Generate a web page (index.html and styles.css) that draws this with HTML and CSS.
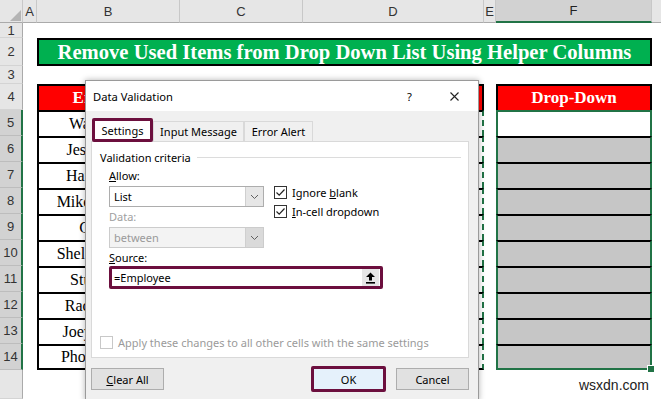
FILE: index.html
```html
<!DOCTYPE html>
<html lang="en">
<head>
    <meta charset="UTF-8">
    <title>Remove Used Items from Drop Down List</title>
    <link rel="stylesheet" href="styles.css">
</head>
<body>
    <div class="sheet">
        <!-- column headers -->
        <div class="corner">
            <svg width="14" height="14" viewBox="0 0 14 14"><polygon points="13,2 13,13 2,13" fill="#b4b4b4"/></svg>
        </div>
        <div class="colhead">A</div>
        <div class="colhead">B</div>
        <div class="colhead">C</div>
        <div class="colhead">D</div>
        <div class="colhead">E</div>
        <div class="colhead sel">F</div>
        <div class="colhead last"></div>

        <!-- row 1 -->
        <div class="rowhead">1</div>
        <div class="blank span7"></div>

        <!-- row 2 -->
        <div class="rowhead">2</div>
        <div class="blank"></div>
        <div class="title">Remove Used Items from Drop Down List Using Helper Columns</div>
        <div class="blank"></div>

        <!-- row 3 -->
        <div class="rowhead">3</div>
        <div class="blank span7"></div>

        <!-- row 4 -->
        <div class="rowhead">4</div>
        <div class="blank"></div>
        <div class="thead first">Employee</div>
        <div class="thead">Helper 1</div>
        <div class="thead">Helper 2</div>
        <div class="blank"></div>
        <div class="thead single">Drop-Down</div>
        <div class="blank"></div>

        <!-- rows 5 - 14 -->
        <div class="rowhead sel">5</div><div class="blank"></div>
        <div class="td first">Walt Disney</div><div class="td"></div><div class="td copy"></div>
        <div class="blank"></div><div class="dd white"></div><div class="blank"></div>

        <div class="rowhead sel">6</div><div class="blank"></div>
        <div class="td first">Jessica Jones</div><div class="td"></div><div class="td copy"></div>
        <div class="blank"></div><div class="dd"></div><div class="blank"></div>

        <div class="rowhead sel">7</div><div class="blank"></div>
        <div class="td first">Harold Finch</div><div class="td"></div><div class="td copy"></div>
        <div class="blank"></div><div class="dd"></div><div class="blank"></div>

        <div class="rowhead sel">8</div><div class="blank"></div>
        <div class="td first">Mike Wazowski</div><div class="td"></div><div class="td copy"></div>
        <div class="blank"></div><div class="dd"></div><div class="blank"></div>

        <div class="rowhead sel">9</div><div class="blank"></div>
        <div class="td first">Chandler</div><div class="td"></div><div class="td copy"></div>
        <div class="blank"></div><div class="dd"></div><div class="blank"></div>

        <div class="rowhead sel">10</div><div class="blank"></div>
        <div class="td first">Sheldon Cooper</div><div class="td"></div><div class="td copy"></div>
        <div class="blank"></div><div class="dd"></div><div class="blank"></div>

        <div class="rowhead sel">11</div><div class="blank"></div>
        <div class="td first">Stuart Little</div><div class="td"></div><div class="td copy"></div>
        <div class="blank"></div><div class="dd"></div><div class="blank"></div>

        <div class="rowhead sel">12</div><div class="blank"></div>
        <div class="td first">Rachel Green</div><div class="td"></div><div class="td copy"></div>
        <div class="blank"></div><div class="dd"></div><div class="blank"></div>

        <div class="rowhead sel">13</div><div class="blank"></div>
        <div class="td first">Joey Tribbiani</div><div class="td"></div><div class="td copy"></div>
        <div class="blank"></div><div class="dd"></div><div class="blank"></div>

        <div class="rowhead sel">14</div><div class="blank"></div>
        <div class="td first">Phoebe Buffay</div><div class="td"></div><div class="td copy"></div>
        <div class="blank"></div><div class="dd last"><span class="handle"></span></div><div class="blank"></div>

        <!-- row 15 -->
        <div class="rowhead"></div>
        <div class="blank span5"></div>
        <div class="blank mark">wsxdn.com</div>
        <div class="blank"></div>
    </div>

    <div class="dialog">
        <div class="dlg-title">
            <span>Data Validation</span>
            <span class="help">?</span>
            <span class="close">
                <svg width="9" height="9" viewBox="0 0 9 9"><path d="M0.5 0.5 L8.5 8.5 M8.5 0.5 L0.5 8.5" stroke="#222" stroke-width="1.1"/></svg>
            </span>
        </div>
        <div class="dlg-body">
            <div class="tabs">
                <div class="tab active">Settings</div>
                <div class="tab msg">Input Message</div>
                <div class="tab err">Error Alert</div>
            </div>
            <div class="panel">
                <div class="group">
                    <span>Validation criteria</span>
                    <span class="rule"></span>
                </div>
                <div class="criteria">
                    <div class="fields">
                        <div class="label"><u>A</u>llow:</div>
                        <div class="combo">
                            <span class="value">List</span>
                            <span class="arrow">
                                <svg width="9" height="6" viewBox="0 0 9 6"><path d="M1 1 L4.5 4.5 L8 1" fill="none" stroke="#606060" stroke-width="1"/></svg>
                            </span>
                        </div>
                        <div class="label off">Data:</div>
                        <div class="combo disabled">
                            <span class="value">between</span>
                            <span class="arrow">
                                <svg width="9" height="6" viewBox="0 0 9 6"><path d="M1 1 L4.5 4.5 L8 1" fill="none" stroke="#606060" stroke-width="1"/></svg>
                            </span>
                        </div>
                        <div class="label end"><u>S</u>ource:</div>
                    </div>
                    <div class="checks">
                        <div class="check">
                            <svg width="13" height="13" viewBox="0 0 13 13"><rect x="0.5" y="0.5" width="12" height="12" fill="#fff" stroke="#333"/><path d="M2.5 6.5 L5.2 9.2 L10.5 3.5" fill="none" stroke="#222" stroke-width="1.2"/></svg>
                            <span>Ignore <u>b</u>lank</span>
                        </div>
                        <div class="check">
                            <svg width="13" height="13" viewBox="0 0 13 13"><rect x="0.5" y="0.5" width="12" height="12" fill="#fff" stroke="#333"/><path d="M2.5 6.5 L5.2 9.2 L10.5 3.5" fill="none" stroke="#222" stroke-width="1.2"/></svg>
                            <span><u>I</u>n-cell dropdown</span>
                        </div>
                    </div>
                </div>
                <div class="source">
                    <span class="value">=Employee</span>
                    <span class="pick">
                        <svg width="11" height="12" viewBox="0 0 11 12"><polygon points="5.5,0.5 10,5 7,5 7,8.5 4,8.5 4,5 1,5" fill="#000"/><rect x="1" y="10" width="9" height="1.6" fill="#000"/></svg>
                    </span>
                </div>
                <div class="apply">
                    <svg width="13" height="13" viewBox="0 0 13 13"><rect x="0.5" y="0.5" width="12" height="12" fill="#fff" stroke="#c8c8c8"/></svg>
                    <span>Apply these changes to all other cells with the same settings</span>
                </div>
            </div>
            <div class="buttons">
                <button class="btn"><u>C</u>lear All</button>
                <button class="btn ok">OK</button>
                <button class="btn">Cancel</button>
            </div>
        </div>
    </div>
</body>
</html>
```

FILE: styles.css
```css
body {
    margin: 0;
    width: 661px;
    height: 399px;
    overflow: hidden;
    background: #fff;
    position: relative;
}

/* the worksheet grid */
.sheet {
    display: grid;
    grid-template-columns: 23px 14px 143px 123px 181px 12px 156px 9px;
    grid-template-rows: 23px 15px 28px 18px 26px repeat(10, 26px) 29px;
    font-family: "Liberation Serif", serif;
}
.corner {
    background: #e6e6e6;
    border-right: 1px solid #c8c8c8;
    border-bottom: 1px solid #aaa;
    box-sizing: border-box;
    display: flex;
    align-items: flex-end;
    justify-content: flex-end;
}
.colhead {
    background: #e6e6e6;
    border-right: 1px solid #c8c8c8;
    border-bottom: 1px solid #aaa;
    box-sizing: border-box;
    font-family: "Liberation Sans", sans-serif;
    font-size: 13px;
    color: #333;
    display: flex;
    align-items: center;
    justify-content: center;
}
.colhead.sel {
    background: #d2d2d2;
    border-bottom: 2px solid #217346;
    color: #222;
}
.colhead.last {
    border-right: none;
}
.rowhead {
    background: #e6e6e6;
    border-right: 1px solid #aaa;
    border-bottom: 1px solid #d4d4d4;
    box-sizing: border-box;
    font-family: "Liberation Sans", sans-serif;
    font-size: 13px;
    color: #333;
    display: flex;
    align-items: center;
    justify-content: center;
}
.rowhead.sel {
    background: #d2d2d2;
    border-right: 2px solid #217346;
    border-bottom-color: #bdbdbd;
}
.blank {
    background: #fff;
}
.span7 { grid-column: span 7; }
.span5 { grid-column: span 5; }

.title {
    grid-column: span 5;
    background: #00b050;
    border: 2px solid #000;
    box-sizing: border-box;
    color: #fff;
    font-weight: bold;
    font-size: 20.6px;
    display: flex;
    align-items: center;
    justify-content: center;
}

/* employee table */
.thead {
    background: #f00;
    color: #fff;
    font-weight: bold;
    font-size: 17px;
    border-top: 2px solid #000;
    border-right: 2px solid #000;
    box-sizing: border-box;
    display: flex;
    align-items: center;
    justify-content: center;
}
.thead.first {
    border-left: 2px solid #000;
}
.thead.single {
    border-left: 2px solid #000;
}
.td {
    border-top: 2px solid #000;
    border-right: 2px solid #000;
    box-sizing: border-box;
    font-size: 16px;
    display: flex;
    align-items: center;
    justify-content: center;
    white-space: nowrap;
}
.td.first {
    border-left: 2px solid #000;
}
.sheet > .td:nth-last-child(-n+12) {
    border-bottom: 2px solid #000;
}
.td.copy {
    border-right: 2px dashed #217346;
}

/* drop-down column */
.dd {
    background: #c6c6c6;
    border-left: 2px solid #217346;
    border-right: 2px solid #217346;
    border-top: 2px solid #000;
    box-sizing: border-box;
    position: relative;
}
.dd.white {
    background: #fff;
    border-top-color: #217346;
}
.dd.last {
    border-bottom: 2px solid #217346;
}
.handle {
    position: absolute;
    right: -5px;
    bottom: -5px;
    width: 6px;
    height: 6px;
    background: #217346;
    border: 1px solid #fff;
}
.mark {
    font-family: "Liberation Sans", sans-serif;
    font-size: 14px;
    color: #222;
    display: flex;
    align-items: center;
    justify-content: flex-end;
    padding-right: 3px;
}

/* Data Validation dialog */
.dialog {
    position: absolute;
    left: 85px;
    top: 80px;
    width: 392px;
    height: 319px;
    background: #f0f0f0;
    border: 1px solid #9a9a9a;
    box-shadow: 0 0 6px rgba(0, 0, 0, 0.3);
    font-family: "Noto Sans", sans-serif;
    font-size: 11px;
    color: #000;
}
.dlg-title {
    height: 30px;
    background: #fff;
    display: flex;
    align-items: center;
    padding-left: 7px;
    font-size: 11.2px;
}
.help {
    margin-left: auto;
    width: 12px;
    margin-right: 31px;
}
.close {
    display: flex;
    margin-right: 19px;
}
.dlg-body {
    padding: 7px 0 0 5px;
}
.tabs {
    display: flex;
    align-items: flex-end;
    height: 23px;
    position: relative;
    z-index: 1;
}
.tab {
    height: 20px;
    box-sizing: border-box;
    border: 1px solid #d9d9d9;
    border-bottom: none;
    background: #f0f0f0;
    display: flex;
    align-items: center;
    justify-content: center;
}
.tab.active {
    width: 61px;
    height: 24px;
    margin-left: 1px;
    border: 3px solid #6c0f3e;
    background: #fff;
    border-radius: 2px;
    margin-bottom: -1px;
}
.tab.msg { width: 91px; }
.tab.err { width: 69px; }

.panel {
    width: 378px;
    height: 217px;
    box-sizing: border-box;
    background: #fff;
    border: 1px solid #d9d9d9;
    display: flex;
    flex-direction: column;
    padding: 7px 7px 7px 8px;
}
.group {
    display: flex;
    align-items: center;
    gap: 6px;
    height: 16px;
}
.rule {
    flex: 1;
    border-top: 1px solid #dcdcdc;
}
.criteria {
    display: flex;
    padding-left: 9px;
    margin-top: 3px;
}
.fields {
    width: 155px;
}
.label {
    height: 16px;
    line-height: 16px;
    margin-bottom: 2px;
}
.label.end {
    margin-bottom: 0;
}
.label.off {
    color: #a0a0a0;
}
.combo {
    height: 21px;
    box-sizing: border-box;
    border: 1px solid #adadad;
    background: #fff;
    display: flex;
    align-items: stretch;
    margin-bottom: 2px;
}
.combo .value {
    flex: 1;
    padding-left: 4px;
    display: flex;
    align-items: center;
}
.combo .arrow {
    width: 17px;
    background: #e6e6e6;
    border-left: 1px solid #cfcfcf;
    display: flex;
    align-items: center;
    justify-content: center;
}
.combo.disabled {
    background: #f3f3f3;
    border-color: #cccccc;
    color: #9a9a9a;
}
.combo.disabled .arrow {
    background: #dadada;
}
.checks {
    margin-left: 10px;
    margin-top: 18px;
    display: flex;
    flex-direction: column;
    gap: 6px;
}
.check {
    display: flex;
    align-items: center;
    gap: 5px;
    height: 13px;
}
.source {
    margin-left: 9px;
    width: 274px;
    height: 23px;
    box-sizing: border-box;
    border: 3px solid #6c0f3e;
    border-radius: 2px;
    background: #fff;
    display: flex;
    align-items: center;
}
.source .value {
    flex: 1;
    padding-left: 2px;
}
.pick {
    width: 17px;
    height: 17px;
    background: #e6e6e6;
    display: flex;
    align-items: center;
    justify-content: center;
    margin-right: 1px;
}
.apply {
    margin-top: auto;
    display: flex;
    align-items: center;
    gap: 5px;
    color: #9a9a9a;
}
.buttons {
    display: flex;
    align-items: center;
    margin-top: 8px;
    width: 378px;
}
.btn {
    font-family: "Noto Sans", sans-serif;
    font-size: 11px;
    color: #000;
    width: 73px;
    height: 22px;
    padding: 0;
    background: #e1e1e1;
    border: 1px solid #adadad;
}
.btn.ok {
    margin-left: auto;
    margin-right: 10px;
    width: 75px;
    height: 26px;
    background: #e5f1fb;
    border: 3px solid #6c0f3e;
    border-radius: 2px;
}
```
